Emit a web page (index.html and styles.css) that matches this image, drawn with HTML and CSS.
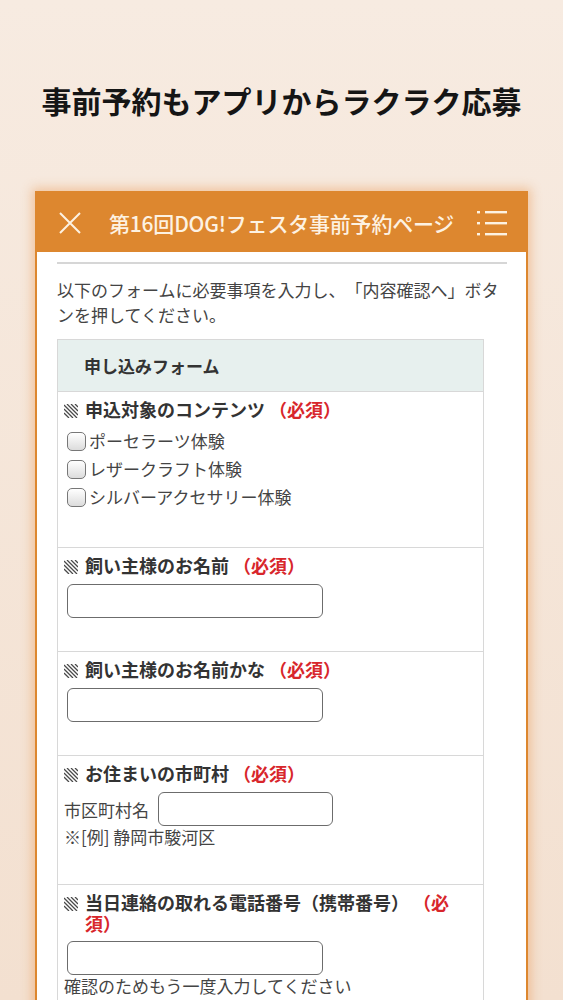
FILE: index.html
```html
<!DOCTYPE html>
<html lang="ja">
<head>
<meta charset="utf-8">
<link rel="stylesheet" href="styles.css">
</head>
<body>
<div class="page">
  <h1 class="headline">事前予約もアプリからラクラク応募</h1>
  <div class="card">
    <div class="bar">
      <svg class="close" viewBox="0 0 22 22" width="22" height="22"><path d="M1 1L21 21M21 1L1 21" stroke="#fdf2e2" stroke-width="2" fill="none"/></svg>
      <div class="title">第16回DOG!フェスタ事前予約ページ</div>
      <svg class="menu" viewBox="0 0 30 26" width="30" height="26"><g fill="#fdf2e2"><rect x="0" y="1" width="3" height="2.4"/><rect x="0" y="12" width="3" height="2.4"/><rect x="0" y="23" width="3" height="2.4"/><rect x="8" y="1" width="22" height="2.4"/><rect x="8" y="12" width="22" height="2.4"/><rect x="8" y="23" width="22" height="2.4"/></g></svg>
    </div>
    <div class="body">
      <div class="rule"></div>
      <p class="intro">以下のフォームに必要事項を入力し、「内容確認へ」ボタンを押してください。</p>
      <div class="form">
        <div class="form-head">申し込みフォーム</div>
        <div class="row row-check">
          <div class="label"><svg class="hatch" viewBox="0 0 14 14" width="14" height="14"><path d="M0 1L13 14M0 5L9 14M0 9L5 14M3 0L14 11M7 0L14 7M11 0L14 3" stroke="#4a4a4a" stroke-width="1.3" fill="none"/></svg>申込対象のコンテンツ <span class="req">（必須）</span></div>
          <ul class="checks">
            <li><span class="box"></span>ポーセラーツ体験</li>
            <li><span class="box"></span>レザークラフト体験</li>
            <li><span class="box"></span>シルバーアクセサリー体験</li>
          </ul>
        </div>
        <div class="row">
          <div class="label"><svg class="hatch" viewBox="0 0 14 14" width="14" height="14"><path d="M0 1L13 14M0 5L9 14M0 9L5 14M3 0L14 11M7 0L14 7M11 0L14 3" stroke="#4a4a4a" stroke-width="1.3" fill="none"/></svg>飼い主様のお名前 <span class="req">（必須）</span></div>
          <div class="field"></div>
        </div>
        <div class="row">
          <div class="label"><svg class="hatch" viewBox="0 0 14 14" width="14" height="14"><path d="M0 1L13 14M0 5L9 14M0 9L5 14M3 0L14 11M7 0L14 7M11 0L14 3" stroke="#4a4a4a" stroke-width="1.3" fill="none"/></svg>飼い主様のお名前かな <span class="req">（必須）</span></div>
          <div class="field"></div>
        </div>
        <div class="row row-city">
          <div class="label"><svg class="hatch" viewBox="0 0 14 14" width="14" height="14"><path d="M0 1L13 14M0 5L9 14M0 9L5 14M3 0L14 11M7 0L14 7M11 0L14 3" stroke="#4a4a4a" stroke-width="1.3" fill="none"/></svg>お住まいの市町村 <span class="req">（必須）</span></div>
          <div class="inline"><span>市区町村名</span><div class="field short"></div></div>
          <div class="note">※[例] 静岡市駿河区</div>
        </div>
        <div class="row">
          <div class="label"><svg class="hatch" viewBox="0 0 14 14" width="14" height="14"><path d="M0 1L13 14M0 5L9 14M0 9L5 14M3 0L14 11M7 0L14 7M11 0L14 3" stroke="#4a4a4a" stroke-width="1.3" fill="none"/></svg>当日連絡の取れる電話番号（携帯番号） <span class="req">（必須）</span></div>
          <div class="field tight"></div>
          <div class="note">確認のためもう一度入力してください</div>
          <div class="field tight"></div>
        </div>
      </div>
    </div>
  </div>
</div>
</body>
</html>
```

FILE: styles.css
```css
html, body {
  margin: 0;
  padding: 0;
}
body {
  width: 563px;
  height: 1000px;
  overflow: hidden;
  background: linear-gradient(#f7ebe1, #f3e0d0);
  font-family: "Noto Sans CJK JP", "Noto Sans", sans-serif;
  color: #3c3c3c;
  text-spacing-trim: space-all;
}
.page {
  padding-top: 80px;
}
.headline {
  margin: 0;
  text-align: center;
  font-size: 30px;
  line-height: 40px;
  font-weight: 700;
  color: #151515;
}
.card {
  margin: 71px 0 0 35px;
  width: 489px;
  border: 2px solid #dd872f;
  border-bottom: none;
  background: #fff;
  box-shadow: 0 0 10px 3px rgba(232, 150, 80, 0.45);
}
.bar {
  height: 59px;
  background: #dd872f;
  display: flex;
  align-items: center;
  padding: 0 19px 0 22px;
}
.close {
  flex: none;
}
.title {
  flex: 1;
  margin-left: 28px;
  color: #fdf2e2;
  font-size: 21px;
  font-weight: 500;
  white-space: nowrap;
  line-height: 28px;
  letter-spacing: -0.2px;
}
.menu {
  flex: none;
}
.body {
  padding: 10px 19px 0 20px;
}
.rule {
  height: 2px;
  background: #d6d6d6;
}
.intro {
  margin: 13px 0 0;
  font-size: 17px;
  line-height: 25px;
  color: #444;
}
.form {
  margin-top: 12px;
  width: 425px;
  border: 1px solid #d8d8d8;
  border-bottom: none;
}
.form-head {
  height: 51px;
  background: #e7f0ee;
  border-bottom: 1px solid #d8d8d8;
  padding-left: 26px;
  font-size: 17px;
  font-weight: 700;
  line-height: 51px;
  color: #333;
}
.row {
  border-bottom: 1px solid #d8d8d8;
  padding: 7px 6px 33px;
}
.label {
  padding-left: 21px;
  text-indent: -21px;
  font-size: 18px;
  font-weight: 700;
  line-height: 21px;
  color: #333;
}
.hatch {
  display: inline-block;
  vertical-align: -1px;
  margin-right: 7px;
}
.req {
  color: #d8262b;
}
.checks {
  list-style: none;
  margin: 7px 0 0;
  padding: 0;
  font-size: 17px;
  line-height: 28px;
  color: #444;
}
.checks li {
  display: flex;
  align-items: center;
}
.row-check {
  padding-bottom: 36px;
}
.box {
  width: 17px;
  height: 17px;
  border: 1.5px solid #777;
  border-radius: 5px;
  background: linear-gradient(#ffffff, #dcdcdc);
  margin: 0 3px 0 3px;
}
.field {
  margin: 8px 0 0 3px;
  width: 254px;
  height: 32px;
  border: 1.5px solid #6c6c6c;
  border-radius: 6px;
  background: #fff;
}
.field.tight {
  margin-top: 7px;
}
.inline {
  display: flex;
  align-items: center;
  margin-top: 8px;
  font-size: 17px;
  color: #444;
}
.field.short {
  margin: 0 0 0 9px;
  width: 173px;
}
.note {
  font-size: 17px;
  line-height: 22px;
  color: #444;
}
.row-city {
  padding-bottom: 36px;
}
```
